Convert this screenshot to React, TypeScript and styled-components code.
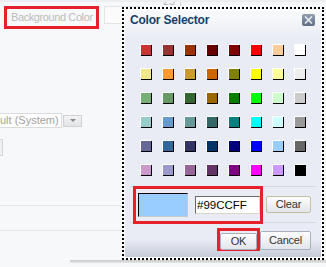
import React from "react";
import styled, { createGlobalStyle } from "styled-components";

const GlobalStyle = createGlobalStyle`
  html, body {
    margin: 0;
    padding: 0;
  }
  body {
    background: #f7f8fa;
    font-family: "Liberation Sans", Arial, sans-serif;
    overflow: hidden;
  }
`;

const PALETTE = [
  ["#CC3333", "#993333", "#993300", "#660000", "#800000", "#FF0000", "#FFCC99", "#FFFFFF"],
  ["#F0E68C", "#FF9933", "#CC9933", "#CC6600", "#808000", "#FFFF00", "#FFFF99", "#EEEEEE"],
  ["#77B077", "#669966", "#336633", "#996600", "#008000", "#00FF00", "#CCFFCC", "#CCCCCC"],
  ["#99CCCC", "#6699CC", "#669999", "#336666", "#008080", "#00FFFF", "#CCFFFF", "#999999"],
  ["#666699", "#336699", "#333366", "#003366", "#000080", "#0000FF", "#99CCFF", "#666666"],
  ["#CC99CC", "#9999CC", "#996699", "#663366", "#800080", "#FF00FF", "#CC99FF", "#000000"],
];

const Page = styled.div`
  position: relative;
  width: 326px;
  height: 267px;
  overflow: hidden;
  background: #f7f8fa;
  display: flex;
  flex-direction: column;
`;

const TopStrip = styled.div`
  display: flex;
  height: 6px;
  overflow: hidden;
  border-top: 2px solid #eceef1;
  box-sizing: border-box;
`;

const Counter = styled.div`
  margin-left: 163px;
  padding-right: 5px;
  border-right: 1px solid #cfd2d8;
  font-size: 11px;
  line-height: 8px;
  margin-top: -5px;
  color: #b5b5b5;
`;

const LabelRow = styled.div`
  display: flex;
  align-items: flex-start;
`;

const Highlight = styled.div`
  border: 3px solid #e7212b;
  box-sizing: border-box;
`;

const FieldLabel = styled(Highlight)`
  margin-left: 4px;
  width: 95px;
  height: 23px;
  padding-left: 4px;
  font-size: 11px;
  line-height: 17px;
  letter-spacing: -0.4px;
  color: #bcbcbc;
  white-space: nowrap;
`;

const EmptyField = styled.div`
  margin-left: 5px;
  width: 40px;
  height: 18px;
  border: 1px solid #e1e4e9;
  background: #fbfbfc;
  box-sizing: border-box;
`;

const SelectRow = styled.div`
  display: flex;
  align-items: center;
  margin-top: 84px;
`;

const SelectBox = styled.div`
  width: 62px;
  height: 15px;
  border: 1px solid #d9dbdf;
  border-left: none;
  background: #fff;
  box-sizing: border-box;
  font-size: 11px;
  line-height: 13px;
  color: #a3a3a3;
  white-space: nowrap;
  overflow: hidden;
`;

const SelectButton = styled.div`
  margin-left: 1px;
  width: 19px;
  height: 12px;
  border: 1px solid #cfd1d5;
  box-sizing: border-box;
  background: linear-gradient(#f4f4f4, #e2e3e5);
  display: flex;
  align-items: center;
  justify-content: center;
`;

const Caret = styled.div`
  width: 0;
  height: 0;
  border-left: 3px solid transparent;
  border-right: 3px solid transparent;
  border-top: 3px solid #8a8a8a;
`;

const StubButton = styled.div`
  margin-top: 11px;
  width: 3px;
  height: 17px;
  border: 1px solid #d4d6da;
  border-left: none;
  background: #eef0f2;
  box-sizing: border-box;
`;

const Rule = styled.div<{ $gap: number }>`
  margin-top: ${(p) => p.$gap}px;
  width: 122px;
  height: 1px;
  background: #e5e7e2;
`;

const ShadowBar = styled.div`
  margin-top: 29px;
  margin-left: 70px;
  width: 256px;
  height: 3px;
  background: linear-gradient(#c9c9c9, #e6e6e6);
`;

/* popup */
const Dialog = styled.div`
  position: absolute;
  left: 122px;
  top: 7px;
  width: 202px;
  height: 253px;
  box-sizing: border-box;
  border: 2px dotted #000;
  background: #fff;
  display: flex;
`;

const Panel = styled.div`
  flex: 1;
  display: flex;
  flex-direction: column;
  border: 1px solid #fdfdfe;
  border-radius: 4px 4px 0 0;
  background: linear-gradient(
    to bottom,
    #fbfcfd 0,
    #e9ecf4 28px,
    #e9ecf4 calc(100% - 18px),
    #c5cbd8 100%
  );
`;

const TitleBar = styled.div`
  display: flex;
  justify-content: space-between;
  align-items: flex-start;
  height: 34px;
  padding: 1px 6px 0 5px;
  box-sizing: border-box;
`;

const Title = styled.div`
  font-size: 12px;
  font-weight: bold;
  line-height: 18px;
  letter-spacing: -0.2px;
  color: #163f6b;
`;

const CloseButton = styled.div`
  margin-top: 3px;
  width: 13px;
  height: 12px;
  border-radius: 2px;
  background: linear-gradient(#93a0b3, #5f6d83);
  display: flex;
  align-items: center;
  justify-content: center;
`;

const SwatchGrid = styled.div`
  display: grid;
  grid-template-columns: repeat(8, 11px);
  grid-auto-rows: 11px;
  column-gap: 11px;
  row-gap: 13px;
  padding-left: 15px;
  margin-bottom: 11px;
`;

const Swatch = styled.div<{ $color: string }>`
  box-sizing: border-box;
  width: 11px;
  height: 11px;
  background: ${(p) => p.$color};
  border-top: 1px solid #fff;
  border-left: 1px solid #fff;
  box-shadow: 1px 1px 0 #000;
`;

const PreviewSection = styled.div`
  display: flex;
  align-items: center;
  margin: 0 5px;
  height: 37px;
  box-sizing: border-box;
  padding: 0 5px 0 3px;
  border-top: 1px solid #d3d7df;
  border-bottom: 1px solid #d3d7df;
`;

const PreviewFrame = styled(Highlight)`
  display: flex;
  align-items: center;
  width: 130px;
  height: 38px;
  margin: -2px 0;
`;

const Preview = styled.div<{ $color: string }>`
  margin-left: 2px;
  width: 50px;
  height: 24px;
  box-sizing: border-box;
  background: ${(p) => p.$color};
  border-top: 1px solid #000;
  border-left: 1px solid #000;
  border-right: 1px solid #c5c9d2;
  border-bottom: 1px solid #c5c9d2;
`;

const HexInput = styled.input`
  margin: 0 0 0 7px;
  width: 65px;
  height: 18px;
  box-sizing: border-box;
  padding: 0 1px;
  border-style: solid;
  border-width: 1px;
  border-color: #6b6b6b #d9d6c9 #d9d6c9 #6b6b6b;
  background: #fff;
  font-family: "Liberation Sans", Arial, sans-serif;
  font-size: 11.5px;
  color: #000;
  outline: none;
`;

const Button = styled.button<{ $w: number; $h: number; $khaki?: boolean }>`
  width: ${(p) => p.$w}px;
  height: ${(p) => p.$h}px;
  padding: 0;
  border: 1px solid ${(p) => (p.$khaki ? "#c3c0a4" : "#a9b0bd")};
  border-radius: 2px;
  background: linear-gradient(#fdfdfe, #e2e5eb);
  font-family: "Liberation Sans", Arial, sans-serif;
  font-size: 11px;
  line-height: 1;
  color: #333;
  letter-spacing: -0.2px;
`;

const ClearButton = styled(Button)`
  margin-left: 3px;
`;

const Footer = styled.div`
  display: flex;
  justify-content: flex-end;
  align-items: flex-start;
  padding: 5px 10px 0 0;
`;

const OkFrame = styled(Highlight)`
  width: 43px;
  height: 23px;
`;

const CancelButton = styled(Button)`
  margin-top: 3px;
`;

export default function App() {
  return (
    <>
      <GlobalStyle />
      <Page>
        <TopStrip>
          <Counter>25</Counter>
        </TopStrip>
        <LabelRow>
          <FieldLabel>Background Color</FieldLabel>
          <EmptyField />
        </LabelRow>
        <SelectRow>
          <SelectBox>ult (System)</SelectBox>
          <SelectButton>
            <Caret />
          </SelectButton>
        </SelectRow>
        <StubButton />
        <Rule $gap={49} />
        <Rule $gap={24} />
        <ShadowBar />

        <Dialog>
          <Panel>
            <TitleBar>
              <Title>Color Selector</Title>
              <CloseButton>
                <svg width="9" height="8" viewBox="0 0 9 8">
                  <path d="M1 0.5 L8 7.5 M8 0.5 L1 7.5" stroke="#e8ebf0" strokeWidth="1.6" />
                </svg>
              </CloseButton>
            </TitleBar>
            <SwatchGrid>
              {PALETTE.flat().map((c, i) => (
                <Swatch key={i} $color={c} />
              ))}
            </SwatchGrid>
            <PreviewSection>
              <PreviewFrame>
                <Preview $color="#99CCFF" />
                <HexInput defaultValue="#99CCFF" />
              </PreviewFrame>
              <ClearButton $w={45} $h={17} $khaki>
                Clear
              </ClearButton>
            </PreviewSection>
            <Footer>
              <OkFrame>
                <Button $w={37} $h={17}>OK</Button>
              </OkFrame>
              <CancelButton $w={51} $h={19}>
                Cancel
              </CancelButton>
            </Footer>
          </Panel>
        </Dialog>
      </Page>
    </>
  );
}
